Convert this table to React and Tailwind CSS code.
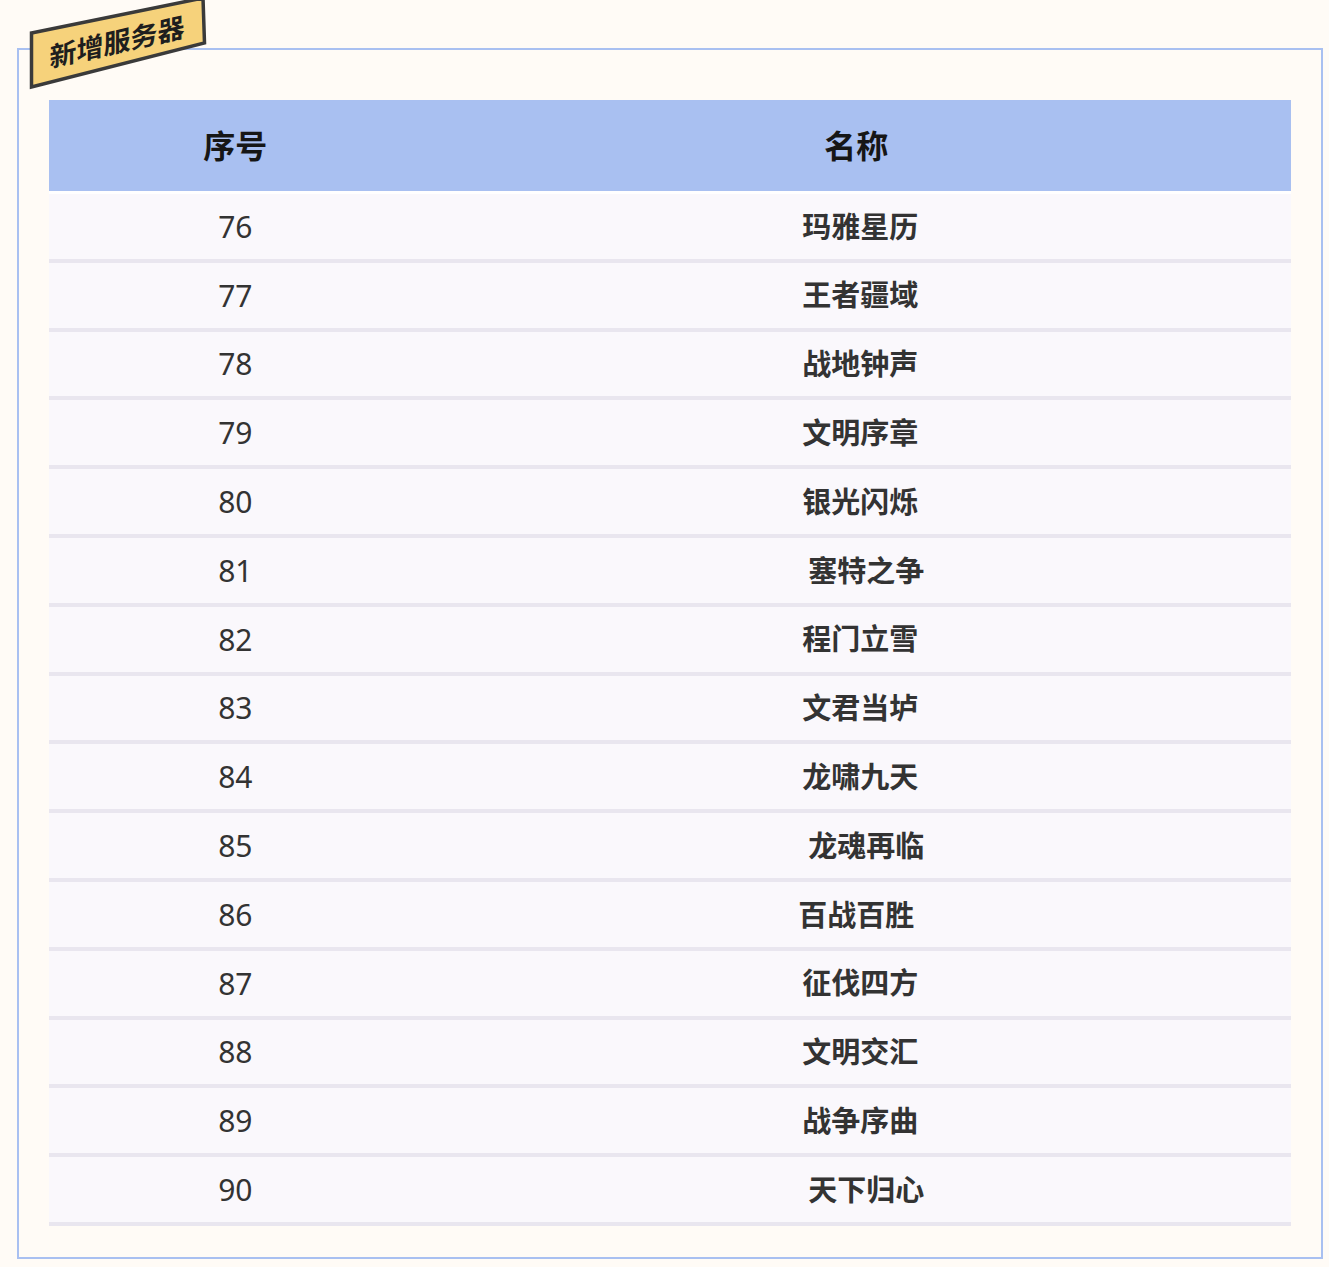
import React from "react";

const rows = [
  ["76", "玛雅星历", "pl-[8px]"],
  ["77", "王者疆域", "pl-[8px]"],
  ["78", "战地钟声", "pl-[8px]"],
  ["79", "文明序章", "pl-[8px]"],
  ["80", "银光闪烁", "pl-[8px]"],
  ["81", "塞特之争", "pl-[20px]"],
  ["82", "程门立雪", "pl-[8px]"],
  ["83", "文君当垆", "pl-[8px]"],
  ["84", "龙啸九天", "pl-[8px]"],
  ["85", "龙魂再临", "pl-[20px]"],
  ["86", "百战百胜", "pl-0"],
  ["87", "征伐四方", "pl-[8px]"],
  ["88", "文明交汇", "pl-[8px]"],
  ["89", "战争序曲", "pl-[8px]"],
  ["90", "天下归心", "pl-[20px]"],
];

export default function App() {
  return (
    <div className="relative min-h-[1267px] w-full bg-[#fffbf6] pt-[48px] pl-[17px] pr-[6px] pb-[9px] font-['Noto_Sans','Noto_Sans_CJK_SC',sans-serif]">
      <div className="border-2 border-[#a9c0f1] px-[30px] pt-[50px] pb-[31px]">
        <div className="flex h-[91px] bg-[#a9c0f1] text-[32px] font-bold text-[#161616]">
          <div className="flex w-[30%] items-center justify-center">序号</div>
          <div className="flex flex-1 items-center justify-center">名称</div>
        </div>
        <div className="h-[3px] bg-white" />
        {rows.map(([n, name, pad]) => (
          <div
            key={n}
            className="flex h-[68.8px] border-b-[4px] border-[#e9e6ef] bg-[#faf8fc] text-[#333333]"
          >
            <div className="flex w-[30%] items-center justify-center text-[30px] font-normal">
              {n}
            </div>
            <div className={`flex flex-1 items-center justify-center text-[29px] font-bold ${pad}`}>
              {name}
            </div>
          </div>
        ))}
      </div>

      <svg
        className="absolute left-0 top-0"
        width="215"
        height="95"
        viewBox="0 0 215 95"
      >
        <polygon
          points="31.5,33 203,-2 204.5,43 31.5,87"
          fill="#f6d27b"
          stroke="#3a3a3a"
          strokeWidth="3.5"
          strokeLinejoin="miter"
        />
      </svg>
      <div className="absolute left-[30px] top-[21px] w-[174px] h-[40px] skew-y-[-13deg] text-center text-[27px] leading-[40px] font-bold text-[#1e1e1e] font-['Noto_Sans_CJK_SC',sans-serif]">
        新增服务器
      </div>
    </div>
  );
}
